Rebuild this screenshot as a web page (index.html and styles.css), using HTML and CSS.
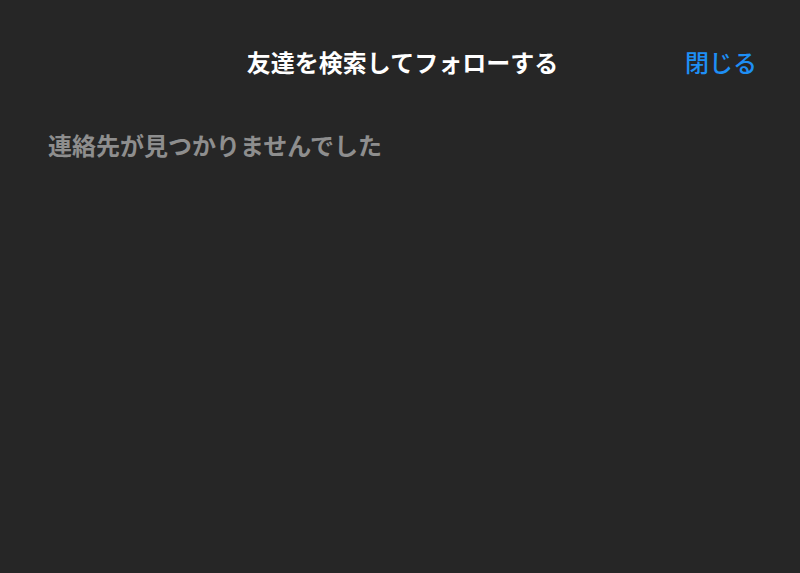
FILE: index.html
```html
<!DOCTYPE html>
<html lang="ja">
<head>
    <meta charset="UTF-8">
    <meta name="viewport" content="width=device-width, initial-scale=1.0">
    <title>友達を検索してフォローする</title>
    <link rel="stylesheet" href="styles.css">
</head>
<body>
    <div class="page">
        <header class="header">
            <span></span>
            <h1 class="title">友達を検索してフォローする</h1>
            <button class="close-btn" type="button">閉じる</button>
        </header>
        <p class="empty-message">連絡先が見つかりませんでした</p>
    </div>
</body>
</html>
```

FILE: styles.css
```css
html, body {
    margin: 0;
    padding: 0;
    height: 100%;
    background-color: #262626;
}

body {
    font-family: "Noto Sans CJK JP", "Noto Sans", sans-serif;
}

.page {
    min-height: 100%;
}

.header {
    display: grid;
    grid-template-columns: 1fr auto 1fr;
    align-items: center;
    padding: 46px 43px 0 48px;
}

.title {
    margin: 0;
    color: #ffffff;
    font-size: 24px;
    font-weight: 700;
    line-height: 32px;
}

.close-btn {
    justify-self: end;
    padding: 0;
    background: none;
    border: none;
    color: #1e8ff5;
    font-family: inherit;
    font-size: 24px;
    font-weight: 500;
    line-height: 32px;
    cursor: pointer;
}

.empty-message {
    margin: 51px 0 0 48px;
    color: #8e8e8e;
    font-size: 24px;
    font-weight: 700;
    line-height: 32px;
}
```
